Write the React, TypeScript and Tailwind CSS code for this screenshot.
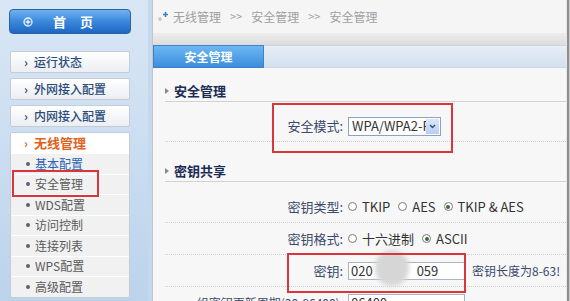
import React from 'react';

const subItems = ['基本配置', '安全管理', 'WDS配置', '访问控制', '连接列表', 'WPS配置', '高级配置'];

const Radio = ({ checked, label }: { checked?: boolean; label: string }) => (
  <span className="inline-flex items-center gap-[5px] mr-[8px]">
    <span className="w-[9px] h-[9px] rounded-full border border-[#7a7a7a] bg-white flex items-center justify-center">
      {checked && <span className="w-[4px] h-[4px] rounded-full bg-[#3d6b3d]" />}
    </span>
    <span>{label}</span>
  </span>
);

const FormRow = ({ label, children, last }: { label: string; children: React.ReactNode; last?: boolean }) => (
  <div className={`flex items-center h-[32px] shrink-0 ${last ? '' : 'border-b border-dotted border-[#cfcfcf]'}`}>
    <div className={`w-[178px] text-right text-[#3a4a6b] shrink-0 whitespace-nowrap ${last ? 'text-[12px]' : ''}`}>{label}</div>
    <div className="ml-[5px] flex items-center text-[#333] whitespace-nowrap">{children}</div>
  </div>
);

const SectionHead = ({ title }: { title: string }) => (
  <div className="h-[22px] shrink-0 flex items-center border-b border-[#d2d2d2]">
    <span className="w-0 h-0 border-y-[3px] border-y-transparent border-l-[4px] border-l-[#8a8a8a] mr-[5px]" />
    <span className="text-[13px] font-bold text-[#1c2c55]">{title}</span>
  </div>
);

export default function App() {
  return (
    <div className="w-[570px] h-[301px] overflow-hidden flex bg-[#c9dcef] text-[12px] font-['Noto_Sans_CJK_SC','Noto_Sans',sans-serif]">
      {/* Sidebar */}
      <aside className="relative w-[148px] shrink-0 pt-[9px] pl-[9px] bg-gradient-to-b from-[#d9e7f5] to-[#bcd3ec]">
        <div className="w-[122px] h-[25px] rounded-[4px] border border-[#2b63a6] bg-gradient-to-b from-[#6fb2ef] via-[#3a88dc] to-[#1f66c2] flex items-center text-white">
          <svg width="10" height="10" viewBox="0 0 10 10" className="ml-[13px]">
            <circle cx="5" cy="5" r="4" fill="none" stroke="#e8f2ff" strokeWidth="1.3" />
            <path d="M5 2.6v4.8M2.6 5h4.8" stroke="#e8f2ff" strokeWidth="1.3" />
          </svg>
          <span className="ml-[20px] font-bold tracking-[14px] text-[13px]">首页</span>
        </div>

        <div className="mt-[17px] flex flex-col gap-[5px] w-[120px] ml-[1px]">
          {['运行状态', '外网接入配置', '内网接入配置'].map((t) => (
            <div
              key={t}
              className="h-[22px] rounded-[2px] border border-[#c3ccd8] bg-gradient-to-b from-white to-[#eceef2] flex items-center pl-[13px] text-[12px] font-medium text-[#2b4d7c]"
            >
              <span className="mr-[6px] font-bold">›</span>
              {t}
            </div>
          ))}
          <div className="rounded-[2px] border border-[#c3ccd8] bg-[#f1f1f1] overflow-hidden">
            <div className="h-[20px] bg-white flex items-center pl-[13px] text-[13px] text-[#e0621c] font-bold">
              <span className="mr-[6px] text-[12px]">›</span>
              无线管理
            </div>
            {subItems.map((t, i) => (
              <div key={t} className="h-[20.5px] border-t border-white flex items-center pl-[15px] text-[#5a5a5a]">
                <span className="w-[4px] h-[4px] rounded-full bg-[#5a6270] mr-[5px]" />
                <span className={i === 0 ? 'text-[#2a62b5] underline' : ''}>{t}</span>
              </div>
            ))}
          </div>
        </div>

        <div className="absolute left-[12px] top-[170px] w-[87px] h-[27px] border-2 border-[#d8363c]" />
      </aside>

      {/* Divider */}
      <div className="w-[5px] shrink-0 bg-[#c6d8ec] border-r border-[#c2c6cc]" />

      {/* Main panel */}
      <main className="w-[413px] shrink-0 flex flex-col bg-[#f6f6f6]">
        <div className="h-[33px] shrink-0 bg-[#f5f5f5] flex items-center pl-[3px] text-[#a0a0a0]">
          <svg width="14" height="12" viewBox="0 0 14 12" className="mr-[3px]">
            <path d="M2 8h4M4 6v4" stroke="#b9b9b9" strokeWidth="1.2" />
            <path d="M7 3.5h5M9.5 1v5" stroke="#3b7fd0" strokeWidth="1.6" />
          </svg>
          <span>无线管理</span>
          <span className="mx-[9px] text-[11px]">&gt;&gt;</span>
          <span>安全管理</span>
          <span className="mx-[9px] text-[11px]">&gt;&gt;</span>
          <span>安全管理</span>
        </div>
        <div className="h-[12px] shrink-0 bg-gradient-to-b from-[#ededed] to-[#dcdcdc]" />
        <div className="h-[23px] shrink-0 flex bg-gradient-to-b from-[#e6eef7] to-[#d3e0ee] border-y border-[#cbd6e2]">
          <div className="relative w-[111px] -my-px border border-[#3f82c8] bg-gradient-to-b from-[#6db7f3] to-[#3a8edc] flex items-center justify-center text-white font-bold">
            安全管理
            <span className="absolute left-1/2 -bottom-[6px] -translate-x-1/2 w-0 h-0 border-x-[5px] border-x-transparent border-t-[5px] border-t-[#3a8edc]" />
          </div>
        </div>

        <div className="relative flex-1 pl-[12px] pt-[12px] bg-[#f7f7f7]">
          <SectionHead title="安全管理" />
          <div className="mt-[9px] flex items-center h-[31px] border-b border-dotted border-[#cfcfcf]">
            <div className="w-[178px] text-right text-[#3a4a6b] text-[13px] shrink-0">安全模式:</div>
            <div className="ml-[5px] w-[93px] h-[19px] border border-[#8aa3c4] bg-white flex items-center text-[13px] text-[#333]">
              <span className="pl-[3px] w-[77px] overflow-hidden whitespace-nowrap">WPA/WPA2-PSK</span>
              <span className="w-[13px] h-[15px] ml-auto mr-[1px] bg-gradient-to-b from-[#dbe7f7] to-[#b9cff0] flex items-center justify-center">
                <svg width="7" height="5" viewBox="0 0 7 5">
                  <path d="M1 1l2.5 2.5L6 1" fill="none" stroke="#2f4f8a" strokeWidth="1.4" />
                </svg>
              </span>
            </div>
          </div>

          <div className="mt-[18px]">
            <SectionHead title="密钥共享" />
          </div>

          <div className="mt-[9px] text-[13px]">
            <FormRow label="密钥类型:">
              <Radio label="TKIP" />
              <Radio label="AES" />
              <Radio checked label="TKIP & AES" />
            </FormRow>
            <FormRow label="密钥格式:">
              <Radio label="十六进制" />
              <Radio checked label="ASCII" />
            </FormRow>
            <FormRow label="密钥:">
              <div className="w-[117px] h-[18px] border border-[#a9b4c2] bg-white flex items-center pl-[2px] gap-[44px]">
                <span>020</span>
                <span>059</span>
              </div>
              <span className="ml-[7px] text-[12px] text-[#3a4a6b]">密钥长度为8-63!</span>
            </FormRow>
            <FormRow label="组密钥更新周期(30-86400):" last>
              <div className="w-[117px] h-[18px] border border-[#a9b4c2] bg-white flex items-center pl-[2px]">
                <span>86400</span>
              </div>
            </FormRow>
          </div>

          {/* blurred mask over key */}
          <div className="absolute left-[222px] top-[182px] w-[34px] h-[36px] rounded-full bg-[#d6d6d6] blur-[2px]" />

          {/* annotation boxes */}
          <div className="absolute left-[119px] top-[35px] w-[181px] h-[50px] border-2 border-[#d8363c]" />
          <div className="absolute left-[134px] top-[185px] w-[179px] h-[40px] border-2 border-[#d8363c]" />
        </div>
      </main>

      {/* right edge */}
      <div className="w-[1px] shrink-0 bg-[#e6e6e6]" />
      <div className="w-[2px] shrink-0 bg-[#8e8e8e]" />
      <div className="flex-1 bg-[#c8c8c8]" />
    </div>
  );
}
